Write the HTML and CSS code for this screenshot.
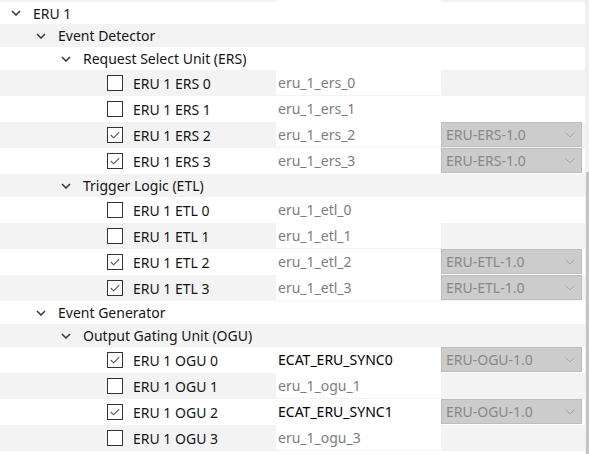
FILE: index.html
```html
<!DOCTYPE html>
<html lang="en">
<head>
<title>ERU Configuration</title>
<link rel="stylesheet" href="styles.css">
</head>
<body>
<div class="view">
    <div class="tree">
        <div class="row odd tail">
            <div class="cell-tree"></div>
            <div class="cell-name"></div>
            <div class="cell-opt"></div>
        </div>

        <div class="row group lvl0 first">
            <div class="label"><svg class="chev" viewBox="0 0 10 6"><path d="M1 1 L5 5 L9 1"/></svg>ERU 1</div>
        </div>
        <div class="row group lvl1 odd">
            <div class="label"><svg class="chev" viewBox="0 0 10 6"><path d="M1 1 L5 5 L9 1"/></svg>Event Detector</div>
        </div>
        <div class="row group lvl2">
            <div class="label"><svg class="chev" viewBox="0 0 10 6"><path d="M1 1 L5 5 L9 1"/></svg>Request Select Unit (ERS)</div>
        </div>

        <div class="row leaf odd">
            <div class="cell-tree"><span class="box"></span>ERU 1 ERS 0</div>
            <div class="cell-name"><span class="hint">eru_1_ers_0</span></div>
            <div class="cell-opt"></div>
        </div>
        <div class="row leaf">
            <div class="cell-tree"><span class="box"></span>ERU 1 ERS 1</div>
            <div class="cell-name"><span class="hint">eru_1_ers_1</span></div>
            <div class="cell-opt"></div>
        </div>
        <div class="row leaf odd">
            <div class="cell-tree"><span class="box"><svg viewBox="0 0 15 15"><path d="M3 7.5 L6 10.5 L12 4.5"/></svg></span>ERU 1 ERS 2</div>
            <div class="cell-name"><span class="hint">eru_1_ers_2</span></div>
            <div class="cell-opt"><div class="select">ERU-ERS-1.0<svg viewBox="0 0 10 6"><path d="M0.5 0.5 L5 5 L9.5 0.5"/></svg></div></div>
        </div>
        <div class="row leaf">
            <div class="cell-tree"><span class="box"><svg viewBox="0 0 15 15"><path d="M3 7.5 L6 10.5 L12 4.5"/></svg></span>ERU 1 ERS 3</div>
            <div class="cell-name"><span class="hint">eru_1_ers_3</span></div>
            <div class="cell-opt"><div class="select">ERU-ERS-1.0<svg viewBox="0 0 10 6"><path d="M0.5 0.5 L5 5 L9.5 0.5"/></svg></div></div>
        </div>

        <div class="row group lvl2 odd">
            <div class="label"><svg class="chev" viewBox="0 0 10 6"><path d="M1 1 L5 5 L9 1"/></svg>Trigger Logic (ETL)</div>
        </div>

        <div class="row leaf">
            <div class="cell-tree"><span class="box"></span>ERU 1 ETL 0</div>
            <div class="cell-name"><span class="hint">eru_1_etl_0</span></div>
            <div class="cell-opt"></div>
        </div>
        <div class="row leaf odd">
            <div class="cell-tree"><span class="box"></span>ERU 1 ETL 1</div>
            <div class="cell-name"><span class="hint">eru_1_etl_1</span></div>
            <div class="cell-opt"></div>
        </div>
        <div class="row leaf">
            <div class="cell-tree"><span class="box"><svg viewBox="0 0 15 15"><path d="M3 7.5 L6 10.5 L12 4.5"/></svg></span>ERU 1 ETL 2</div>
            <div class="cell-name"><span class="hint">eru_1_etl_2</span></div>
            <div class="cell-opt"><div class="select">ERU-ETL-1.0<svg viewBox="0 0 10 6"><path d="M0.5 0.5 L5 5 L9.5 0.5"/></svg></div></div>
        </div>
        <div class="row leaf odd">
            <div class="cell-tree"><span class="box"><svg viewBox="0 0 15 15"><path d="M3 7.5 L6 10.5 L12 4.5"/></svg></span>ERU 1 ETL 3</div>
            <div class="cell-name"><span class="hint">eru_1_etl_3</span></div>
            <div class="cell-opt"><div class="select">ERU-ETL-1.0<svg viewBox="0 0 10 6"><path d="M0.5 0.5 L5 5 L9.5 0.5"/></svg></div></div>
        </div>

        <div class="row group lvl1">
            <div class="label"><svg class="chev" viewBox="0 0 10 6"><path d="M1 1 L5 5 L9 1"/></svg>Event Generator</div>
        </div>
        <div class="row group lvl2 odd">
            <div class="label"><svg class="chev" viewBox="0 0 10 6"><path d="M1 1 L5 5 L9 1"/></svg>Output Gating Unit (OGU)</div>
        </div>

        <div class="row leaf">
            <div class="cell-tree"><span class="box"><svg viewBox="0 0 15 15"><path d="M3 7.5 L6 10.5 L12 4.5"/></svg></span>ERU 1 OGU 0</div>
            <div class="cell-name"><span class="value">ECAT_ERU_SYNC0</span></div>
            <div class="cell-opt"><div class="select">ERU-OGU-1.0<svg viewBox="0 0 10 6"><path d="M0.5 0.5 L5 5 L9.5 0.5"/></svg></div></div>
        </div>
        <div class="row leaf odd">
            <div class="cell-tree"><span class="box"></span>ERU 1 OGU 1</div>
            <div class="cell-name"><span class="hint">eru_1_ogu_1</span></div>
            <div class="cell-opt"></div>
        </div>
        <div class="row leaf">
            <div class="cell-tree"><span class="box"><svg viewBox="0 0 15 15"><path d="M3 7.5 L6 10.5 L12 4.5"/></svg></span>ERU 1 OGU 2</div>
            <div class="cell-name"><span class="value">ECAT_ERU_SYNC1</span></div>
            <div class="cell-opt"><div class="select">ERU-OGU-1.0<svg viewBox="0 0 10 6"><path d="M0.5 0.5 L5 5 L9.5 0.5"/></svg></div></div>
        </div>
        <div class="row leaf odd">
            <div class="cell-tree"><span class="box"></span>ERU 1 OGU 3</div>
            <div class="cell-name"><span class="hint">eru_1_ogu_3</span></div>
            <div class="cell-opt"></div>
        </div>
    </div>
    <div class="scrollbar">
        <div class="thumb"></div>
    </div>
</div>
</body>
</html>
```

FILE: styles.css
```css
html, body {
    margin: 0;
    height: 100%;
    overflow: hidden;
    background-color: white;
}

body {
    font-family: "Noto Sans", "Open Sans", sans-serif;
    font-size: 14px;
    color: #151515;
}

.view {
    display: flex;
    height: 454px;
}

.tree {
    width: 585px;
    display: flex;
    flex-direction: column;
}

.row {
    display: grid;
    grid-template-columns: 276px 165px 144px;
    background-color: white;
    flex: none;
}

.row.odd {
    background-color: #f3f3f3;
}

.row.tail {
    height: 2px;
    overflow: hidden;
}

.row.group {
    height: 23px;
}

.row.group.first {
    height: 22px;
}

.row.leaf {
    height: 26px;
}

.label {
    grid-column: 1 / 4;
    display: flex;
    align-items: center;
    white-space: nowrap;
}

.lvl0 .label { padding-left: 11px; }
.lvl1 .label { padding-left: 36px; }
.lvl2 .label { padding-left: 61px; }

.chev {
    width: 10px;
    height: 6px;
    margin-right: 12px;
    fill: none;
    stroke: #3c3c3c;
    stroke-width: 1.6;
}

.cell-tree {
    display: flex;
    align-items: center;
    padding-left: 107px;
    white-space: nowrap;
}

.box {
    width: 14px;
    height: 14px;
    border: 1px solid #333;
    background-color: white;
    margin-right: 10px;
    flex: none;
    display: flex;
}

.box svg {
    width: 14px;
    height: 14px;
    fill: none;
    stroke: #555;
    stroke-width: 1.2;
}

.cell-name {
    background-color: white;
    margin-bottom: 1px;
    display: flex;
    align-items: center;
    padding-left: 2px;
    white-space: nowrap;
    overflow: hidden;
}

.tail .cell-name {
    margin-bottom: 0;
}

.hint {
    color: #7d7d7d;
}

.value {
    color: black;
}

.cell-opt {
    display: flex;
}

.select {
    flex: 1;
    margin: 0 3px 1px 0;
    background-color: #cccccc;
    border: 1px solid #bdbdbd;
    color: #888888;
    display: flex;
    align-items: center;
    justify-content: space-between;
    padding: 0 6px 0 4px;
}

.select svg {
    width: 10px;
    height: 6px;
    fill: none;
    stroke: #a6a6a6;
    stroke-width: 1;
}

.scrollbar {
    width: 4px;
    background-color: #f0f0f0;
    display: flex;
    flex-direction: column;
    justify-content: flex-end;
}

.thumb {
    height: 282px;
    margin-left: 1px;
    width: 3px;
    background-color: #c4c4c4;
}
```
